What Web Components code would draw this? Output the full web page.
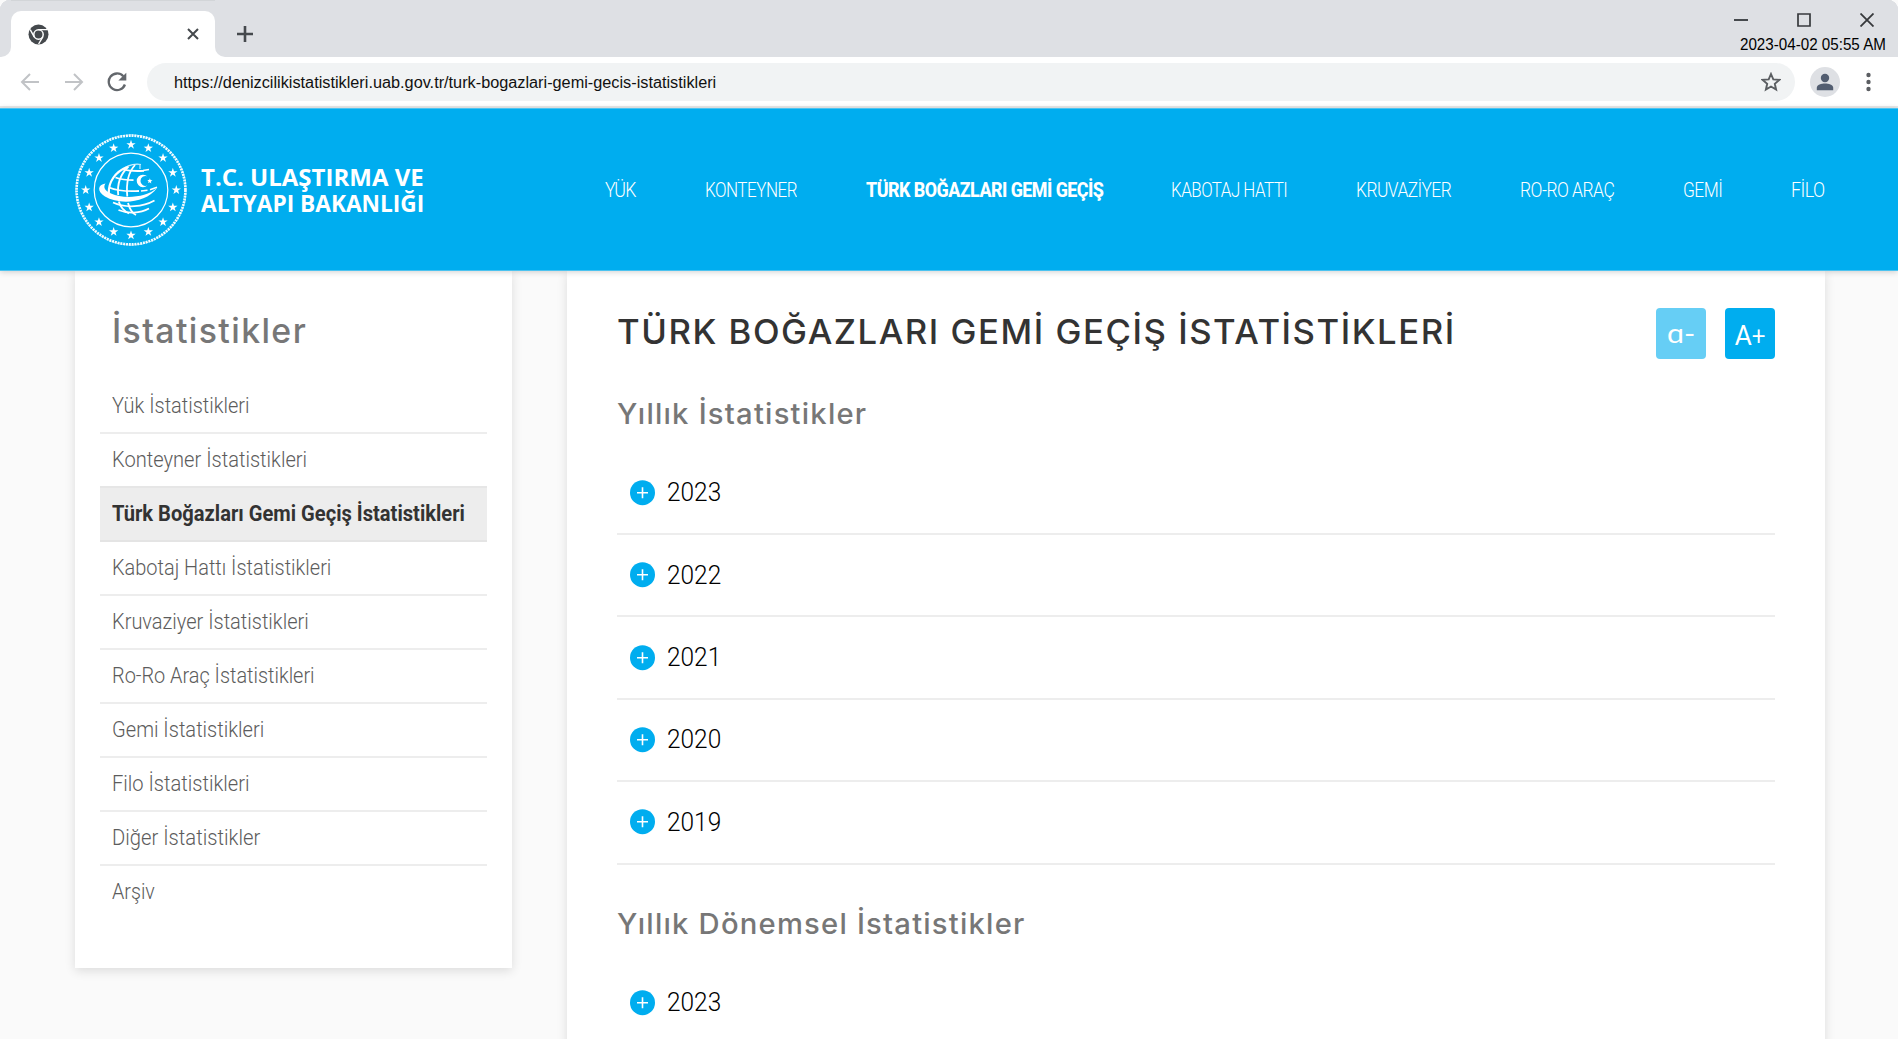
<!DOCTYPE html>
<html lang="tr">
<head>
<meta charset="utf-8">
<title>Türk Boğazları Gemi Geçiş İstatistikleri</title>
<style>
html,body{margin:0;height:100%;overflow:hidden;background:#fafafa}
body{font-family:Roboto,"Liberation Sans",sans-serif}
</style>
</head>
<body>
<stat-page></stat-page>
<script>
const define=(name,html,setup)=>customElements.define(name,class extends HTMLElement{
  connectedCallback(){
    if(this.shadowRoot)return;
    this.attachShadow({mode:'open'}).innerHTML=typeof html==='function'?html(this):html;
    if(setup)setup(this);
  }
});

/* A single line of text set to an exact advance width. */
define('fit-text',`<style>
:host{display:block;white-space:nowrap;flex:none}
span{display:inline-block;transform-origin:0 50%}
</style><span><slot></slot></span>`,el=>{
  const s=el.shadowRoot.querySelector('span'),w=+el.getAttribute('w');
  el.style.width=w+'px';
  s.style.transform=`scaleX(${w/s.offsetWidth})`;
});

define('browser-tabs',`<style>
:host{display:flex;height:57px;background:#dee0e4;border-radius:10px 10px 0 0;box-shadow:inset 0 1px #d2d5d8}
.l{width:11px;background:linear-gradient(#dee0e4 40px,#fff 40px);flex:none;border-radius:10px 0 0 0}
.l i{display:block;height:57px;background:#dee0e4;border-radius:10px 0 10px 0}
.tab{width:204px;margin-top:11px;height:46px;background:#fff;border-radius:10px 10px 0 0;display:flex;align-items:center;justify-content:space-between;padding:0 15px 0 17px;box-sizing:border-box}
.rest{height:57px;background:#dee0e4;border-radius:0 10px 0 10px;display:flex;justify-content:space-between;box-sizing:border-box;padding:0 12px 0 21px}
.cover{flex:1;background:linear-gradient(#dee0e4 40px,#fff 40px);border-radius:0 10px 0 0}
.plus{margin-top:25px}
.win{display:flex;flex-direction:column;align-items:flex-end}
.ic{display:flex;gap:49px;padding:13px 12px 0 0;height:21px}
fit-text{font:16px/21px "Liberation Sans",Arial,sans-serif;color:#000}
svg{display:block;flex:none}
</style>
<div class="l"><i></i></div>
<div class="tab">
<svg width="21" height="21" viewBox="0 0 21 21"><circle cx="10.5" cy="10.500" r="10" fill="#45494d"/><circle cx="10.500" cy="10.500" r="4.700" fill="#45494d" stroke="#fff" stroke-width="1.500"/><path d="M10.500 5.600H19M6.200 12.800 2.200 5.600M14.800 12.800 10.600 20" stroke="#fff" stroke-width="1.400" fill="none"/></svg>
<svg width="14" height="14" viewBox="0 0 14 14"><path d="M2 2 12 12M12 2 2 12" stroke="#45494d" stroke-width="2"/></svg>
</div>
<div class="cover"><div class="rest">
<svg class="plus" width="18" height="18" viewBox="0 0 18 18"><path d="M9 1V17M1 9H17" stroke="#45494d" stroke-width="2.600"/></svg>
<div class="win"><div class="ic">
<svg width="14" height="14" viewBox="0 0 14 14"><path d="M0 7H14" stroke="#45494d" stroke-width="2"/></svg>
<svg width="14" height="14" viewBox="0 0 14 14"><path d="M1 1H13V13H1Z" fill="none" stroke="#37393c" stroke-width="1.700"/></svg>
<svg width="14" height="14" viewBox="0 0 14 14"><path d="M.5 .5 13.500 13.500M13.500 .5 .5 13.500" stroke="#37393c" stroke-width="1.800"/></svg>
</div><fit-text w="146">2023-04-02 05:55 AM</fit-text></div>
</div></div>`);

define('browser-bar',`<style>
:host{display:flex;align-items:center;height:51px;background:#fff;border-bottom:2px solid #e9e9e9;box-sizing:border-box;padding:1px 21px 0 20px}
svg{display:block;flex:none}
.b{margin-right:23.500px}
.u{flex:1;display:flex;align-items:center;justify-content:space-between;height:38px;background:#f1f3f4;border-radius:19px;padding:0 14px 0 27px;margin:0 15px 0 5px}
fit-text{font:16px/22px "Liberation Sans",Arial,sans-serif;color:#111;margin-top:1px}
.m{margin-left:20px}
</style>
<svg class="b" width="20" height="20" viewBox="0 0 20 20"><path d="M19 10H2M10 2 2 10 10 18" stroke="#c1c3c6" stroke-width="2" fill="none"/></svg>
<svg class="b" width="20" height="20" viewBox="0 0 20 20"><path d="M1 10H18M10 2 18 10 10 18" stroke="#c1c3c6" stroke-width="2" fill="none"/></svg>
<svg width="20" height="20" viewBox="0 0 20 20" style="margin-right:15px"><path d="M16.300 4.300A8.300 8.300 0 1 0 17.900 12.500" stroke="#63676c" stroke-width="2.300" fill="none"/><path d="M19.300 .8V8.600H11.400Z" fill="#63676c"/></svg>
<div class="u"><fit-text w="542">https://denizcilikistatistikleri.uab.gov.tr/turk-bogazlari-gemi-gecis-istatistikleri</fit-text>
<svg width="20" height="20" viewBox="0 0 20 20"><path d="M10 2 12.300 7.400 18.300 7.900 13.800 11.800 15.100 17.600 10 14.500 4.900 17.600 6.200 11.800 1.700 7.900 7.700 7.400Z" stroke="#5b5e62" stroke-width="1.900" fill="none"/></svg></div>
<svg width="30" height="30" viewBox="0 0 30 30"><circle cx="15" cy="15" r="15" fill="#dee0e4"/><circle cx="15" cy="11" r="4.200" fill="#525d70"/><path d="M6.800 23.300V20.800C6.800 17.800 11.500 16.500 15 16.500S23.200 17.800 23.200 20.800V23.300Z" fill="#525d70"/></svg>
<svg class="m" width="17" height="20" viewBox="0 0 17 20"><g fill="#5b5e62"><circle cx="8.500" cy="3" r="2.200"/><circle cx="8.500" cy="10" r="2.200"/><circle cx="8.500" cy="17" r="2.200"/></g></svg>`);

const stars=()=>{
  let out='';
  for(let i=0;i<16;i++){
    const a=i*Math.PI/8,cx=56+45.3*Math.sin(a),cy=56-45.3*Math.cos(a),p=[];
    for(let k=0;k<10;k++){const r=k%2?1.9:4.9,t=k*Math.PI/5;p.push((cx+r*Math.sin(t)).toFixed(2)+','+(cy-r*Math.cos(t)).toFixed(2))}
    out+=`<polygon points="${p.join(' ')}"/>`;
  }
  return out;
};
define('ministry-logo',()=>`<style>
:host{display:flex;align-items:center;color:#fff}
svg{display:block;margin-right:14px}
fit-text{font:700 24px/26px "Open Sans","Noto Sans",sans-serif}
</style>
<svg width="112" height="112" viewBox="0 0 112 112" fill="none" stroke="#fff">
<circle cx="56" cy="56" r="54.400" stroke-width="2.600" stroke-dasharray="2 .85" stroke-opacity=".95"/>
<circle cx="56" cy="56" r="55.300" stroke-width=".6" stroke-opacity=".6"/>
<circle cx="56" cy="56" r="36.800" stroke-width="1.200"/>
<g fill="#fff" stroke="none">${stars()}
<path d="M30.500 49.500C22.500 50.500 21.800 57.500 30 62.500C44 71 71 69.500 82 54C71 63.500 49 65.500 36 59.500C29.500 56.500 28 53 30.500 49.500Z"/>
<path d="M72.300 42.300A6.300 6.300 0 1 0 72.300 51.600A5 5 0 1 1 72.300 42.300Z"/>
<path d="M74.900 44.200 75.500 46.100 77.500 46.400 75.900 47.500 76.300 49.500 74.700 48.300 73 49.100 73.600 47.300 72.300 45.900 74.200 45.900Z"/></g>
<g stroke-width="1.800">
<path d="M52 33C40 38 33.500 48 33.800 59" stroke-width="2.200"/>
<path d="M53.500 32.500C45.500 40 42 49 43.200 61M43.800 67.500C45.500 73.500 49 77 54 79.500"/>
<path d="M60 31C53.500 38 51 49 52.300 62.500M53 69C54.500 74.500 57 79 61 81"/>
<path d="M48 35.500C54 37 61 37.300 69 36.800M40.500 43.500C47 45.800 52 46.200 58.500 46.200M34 53.500C42 56.800 52 57.600 64 57"/>
<path d="M66 57 72.500 56.200M75 55.700 82 53.200M68 36.500 74 35.500" stroke-width="1.500"/>
<path d="M38 68.500C51 74.500 68 73 79.500 66.500M43.500 76C53 80 65 79.500 74 74.500" stroke-width="1.700"/>
<path d="M50 34C54 30.500 61 29.500 66 30.500M65 31V35" stroke-width="1.200" stroke-opacity=".8"/>
</g></svg>
<div><fit-text w="223">T.C. ULAŞTIRMA VE</fit-text><fit-text w="223">ALTYAPI BAKANLIĞI</fit-text></div>`);

define('nav-link',el=>`<style>
:host{display:block}
fit-text{font:${el.hasAttribute('active')?800:300} 20px/24px Roboto,sans-serif;letter-spacing:-.6px;color:#fff}
</style><fit-text w="${el.getAttribute('w')}"><slot></slot></fit-text>`);

define('site-header',`<style>
:host{display:flex;align-items:center;justify-content:space-between;position:relative;z-index:1;height:163px;box-sizing:border-box;padding:0 73px 0 75px;background:#00adef;border-bottom:1px solid #4cc3f0;border-top:1px solid #4cc3f0;box-shadow:0 1px 6px rgba(0,0,0,.18)}
nav{display:flex;gap:68.700px}
</style><ministry-logo></ministry-logo>
<nav><nav-link w="31">YÜK</nav-link><nav-link w="92">KONTEYNER</nav-link><nav-link active w="237">TÜRK BOĞAZLARI GEMİ GEÇİŞ</nav-link><nav-link w="116">KABOTAJ HATTI</nav-link><nav-link w="95.500">KRUVAZİYER</nav-link><nav-link w="94.500">RO-RO ARAÇ</nav-link><nav-link w="39">GEMİ</nav-link><nav-link w="34">FİLO</nav-link></nav>`);

define('side-item',el=>`<style>
:host{display:block;height:52px;border-bottom:2px solid #ededed;padding-left:12px}
:host([last]){border-color:transparent}
:host([active]){background:#ededed;border-bottom-color:#e4e4e4;margin-top:-2px;border-top:2px solid #e6e6e6}
fit-text{font:${el.hasAttribute('active')?'700 22px':'300 22px'}/52px Roboto,sans-serif;color:${el.hasAttribute('active')?'#333':'#5c5c5c'}}
</style><fit-text w="${el.getAttribute('w')-2}"><slot></slot></fit-text>`);

define('side-menu',`<style>
:host{display:block;width:437px;height:697px;box-sizing:border-box;padding:39px 25px 0;background:#fff;box-shadow:0 3px 10px rgba(0,0,0,.12)}
fit-text{font:500 34px/42px Inter,sans-serif;letter-spacing:1.400px;color:#777;margin:0 0 28px 12px}
</style><fit-text w="195">İstatistikler</fit-text>
<side-item w="140">Yük İstatistikleri</side-item>
<side-item w="197.500">Konteyner İstatistikleri</side-item>
<side-item active w="355">Türk Boğazları Gemi Geçiş İstatistikleri</side-item>
<side-item w="221.500">Kabotaj Hattı İstatistikleri</side-item>
<side-item w="198.500">Kruvaziyer İstatistikleri</side-item>
<side-item w="204.500">Ro-Ro Araç İstatistikleri</side-item>
<side-item w="154.500">Gemi İstatistikleri</side-item>
<side-item w="140">Filo İstatistikleri</side-item>
<side-item w="150">Diğer İstatistikler</side-item>
<side-item last w="45">Arşiv</side-item>`);

define('year-row',`<style>
:host{display:flex;align-items:center;height:82.400px;box-sizing:border-box;border-bottom:2px solid #ededed;padding-left:13px}
svg{display:block;margin-right:12px}
fit-text{font:300 26px/40px Roboto,sans-serif;color:#000;margin-top:-1px}
</style><svg width="25" height="26" viewBox="0 0 25 26"><circle cx="12.500" cy="12.700" r="12.500" fill="#00adef"/><path d="M12.500 7.200V18.200M7 12.700H18" stroke="#fff" stroke-width="1.600"/></svg><fit-text w="54.500"><slot></slot></fit-text>`);

define('size-button',el=>`<style>
:host{display:flex;align-items:center;justify-content:center;width:50px;height:51px;border-radius:4px;background:#00adef;color:#fff}
:host([dim]){background:#66cef5}
fit-text{font:400 26px/32px Lato,sans-serif;margin-top:3px}
:host([dim]) fit-text{margin-top:-1px}
</style><fit-text w="${el.getAttribute('w')}"><slot></slot></fit-text>`);

define('section-title',el=>`<style>
:host{display:block;padding:1px 0 20.200px}
fit-text{font:500 29px/36px Inter,sans-serif;letter-spacing:1.200px;color:#777}
</style><fit-text w="${el.getAttribute('w')}"><slot></slot></fit-text>`);

define('stat-panel',`<style>
:host{display:block;width:1258px;height:800px;box-sizing:border-box;padding:37px 50px 0;background:#fff;box-shadow:0 3px 10px rgba(0,0,0,.12)}
.t{display:flex;align-items:center;height:51px;margin-bottom:36.400px}
.t>fit-text{font:500 34px/42px Inter,sans-serif;letter-spacing:1.500px;color:#333;margin-bottom:4px;margin-right:auto}
size-button+size-button{margin-left:19px}
.two{margin-top:40.600px}
</style>
<div class="t"><fit-text w="839">TÜRK BOĞAZLARI GEMİ GEÇİŞ İSTATİSTİKLERİ</fit-text><size-button dim w="28">ɑ-</size-button><size-button w="31">A+</size-button></div>
<section-title w="250">Yıllık İstatistikler</section-title>
<year-row>2023</year-row><year-row>2022</year-row><year-row>2021</year-row><year-row>2020</year-row><year-row>2019</year-row>
<section-title class="two" w="409">Yıllık Dönemsel İstatistikler</section-title>
<year-row>2023</year-row>`);

define('stat-page',`<style>
:host{display:block;height:1039px;overflow:hidden;background:#fafafa}
main{display:flex;align-items:flex-start;gap:55px;padding-left:75px}
</style><browser-tabs></browser-tabs><browser-bar></browser-bar><site-header></site-header>
<main><side-menu></side-menu><stat-panel></stat-panel></main>`);
</script>
</body>
</html>
